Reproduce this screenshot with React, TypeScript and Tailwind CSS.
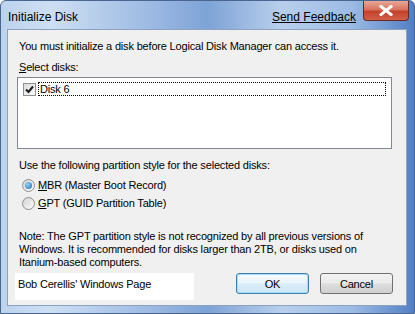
import React from "react";

const font = { fontFamily: '"Liberation Sans", Arial, sans-serif' };

function CheckBox() {
  return (
    <div className="w-[13px] h-[13px] border border-[#8e8f8f] bg-gradient-to-br from-[#dcdcdc] to-[#fbfbfb] flex items-center justify-center">
      <svg width="9" height="9" viewBox="0 0 9 9">
        <path d="M1 4.5 L3.5 7 L8 1.5" stroke="#1b1b1b" strokeWidth="2" fill="none" />
      </svg>
    </div>
  );
}

function Radio({ checked }: { checked?: boolean }) {
  return (
    <div className="w-[13px] h-[13px] rounded-full border border-[#8e8f8f] bg-gradient-to-br from-[#d4d4d4] to-[#fbfbfb] flex items-center justify-center">
      {checked && (
        <div className="w-[7px] h-[7px] rounded-full bg-[radial-gradient(circle_at_35%_35%,#8fd3f7,#1b6bb5)]" />
      )}
    </div>
  );
}

export default function App() {
  return (
    <div
      className="w-[415px] h-[314px] flex flex-col overflow-hidden rounded-t-[6px] border border-[#4a6690] bg-[linear-gradient(90deg,#bcd3ee_0%,#cddff3_12%,#9fbce4_35%,#7ea3d6_50%,#b8cfec_68%,#9cbbe4_85%,#527fc4_100%)] text-[11px] tracking-[-0.18px] text-black"
      style={font}
    >
      <div className="h-[28px] flex items-start shrink-0 relative tracking-normal">
        <div className="pl-[7px] pt-[7px] text-[12px] text-black">Initialize Disk</div>
        <div className="ml-auto pt-[7px] mr-[7px] text-[12px] underline text-black">Send Feedback</div>
        <div className="w-[46px] h-[20px] mr-[5px] rounded-b-[4px] border border-t-0 border-[#6a2a24] bg-[linear-gradient(180deg,#e9a898_0%,#d8735f_45%,#c4412a_55%,#d1604a_100%)] flex items-center justify-center">
          <svg width="14" height="11" viewBox="0 0 14 11">
            <path d="M2 1.5 L12 9.5 M12 1.5 L2 9.5" stroke="#ffffff" strokeWidth="3" strokeLinecap="square" />
          </svg>
        </div>
      </div>
      <div className="flex-1 ml-[6px] mr-[7px] mb-[7px] border border-[#8da2bf] bg-[#f0f0f0] flex flex-col px-[10px] pt-[9px] pb-[4px]">
        <div className="leading-[14px] pl-[1px]">You must initialize a disk before Logical Disk Manager can access it.</div>
        <div className="leading-[14px] pl-[1px] mt-[7px]">
          <span className="underline">S</span>elect disks:
        </div>
        <div className="mt-[3px] h-[72px] border border-[#828790] bg-white px-[5px] pt-[4px] -ml-[1px] mr-[4px]">
          <div className="flex items-center gap-[2px]">
            <CheckBox />
            <div className="flex-1 border border-dotted border-black leading-[12px] pl-[1px] py-[0px]">Disk 6</div>
          </div>
        </div>
        <div className="leading-[14px] pl-[1px] mt-[9px]">Use the following partition style for the selected disks:</div>
        <div className="flex items-center mt-[6px] pl-[4px] gap-[3px] leading-[14px]">
          <Radio checked />
          <span>
            <span className="underline">M</span>BR (Master Boot Record)
          </span>
        </div>
        <div className="flex items-center mt-[4px] pl-[4px] gap-[3px] leading-[14px]">
          <Radio />
          <span>
            <span className="underline">G</span>PT (GUID Partition Table)
          </span>
        </div>
        <div className="leading-[13px] pl-[1px] mt-[20px]">
          Note: The GPT partition style is not recognized by all previous versions of
          <br />
          Windows. It is recommended for disks larger than 2TB, or disks used on
          <br />
          Itanium-based computers.
        </div>
        <div className="flex items-start mt-[4px]">
          <div className="w-[179px] h-[27px] bg-white -ml-[3px] pl-[3px] pt-[4px] leading-[14px]">Bob Cerellis' Windows Page</div>
          <div className="ml-auto flex gap-[11px] mr-[3px]">
            <button className="w-[73px] h-[21px] rounded-[3px] border border-[#3c7fb1] bg-[linear-gradient(180deg,#f6fbfe_0%,#eaf4fb_45%,#d9ecf8_55%,#cde6f6_100%)] shadow-[inset_0_0_0_1px_#a9dbf6] leading-[14px]">
              OK
            </button>
            <button className="w-[73px] h-[21px] rounded-[3px] border border-[#707070] bg-[linear-gradient(180deg,#f2f2f2_0%,#ebebeb_45%,#dddddd_55%,#cfcfcf_100%)] leading-[14px]">
              Cancel
            </button>
          </div>
        </div>
      </div>
    </div>
  );
}
